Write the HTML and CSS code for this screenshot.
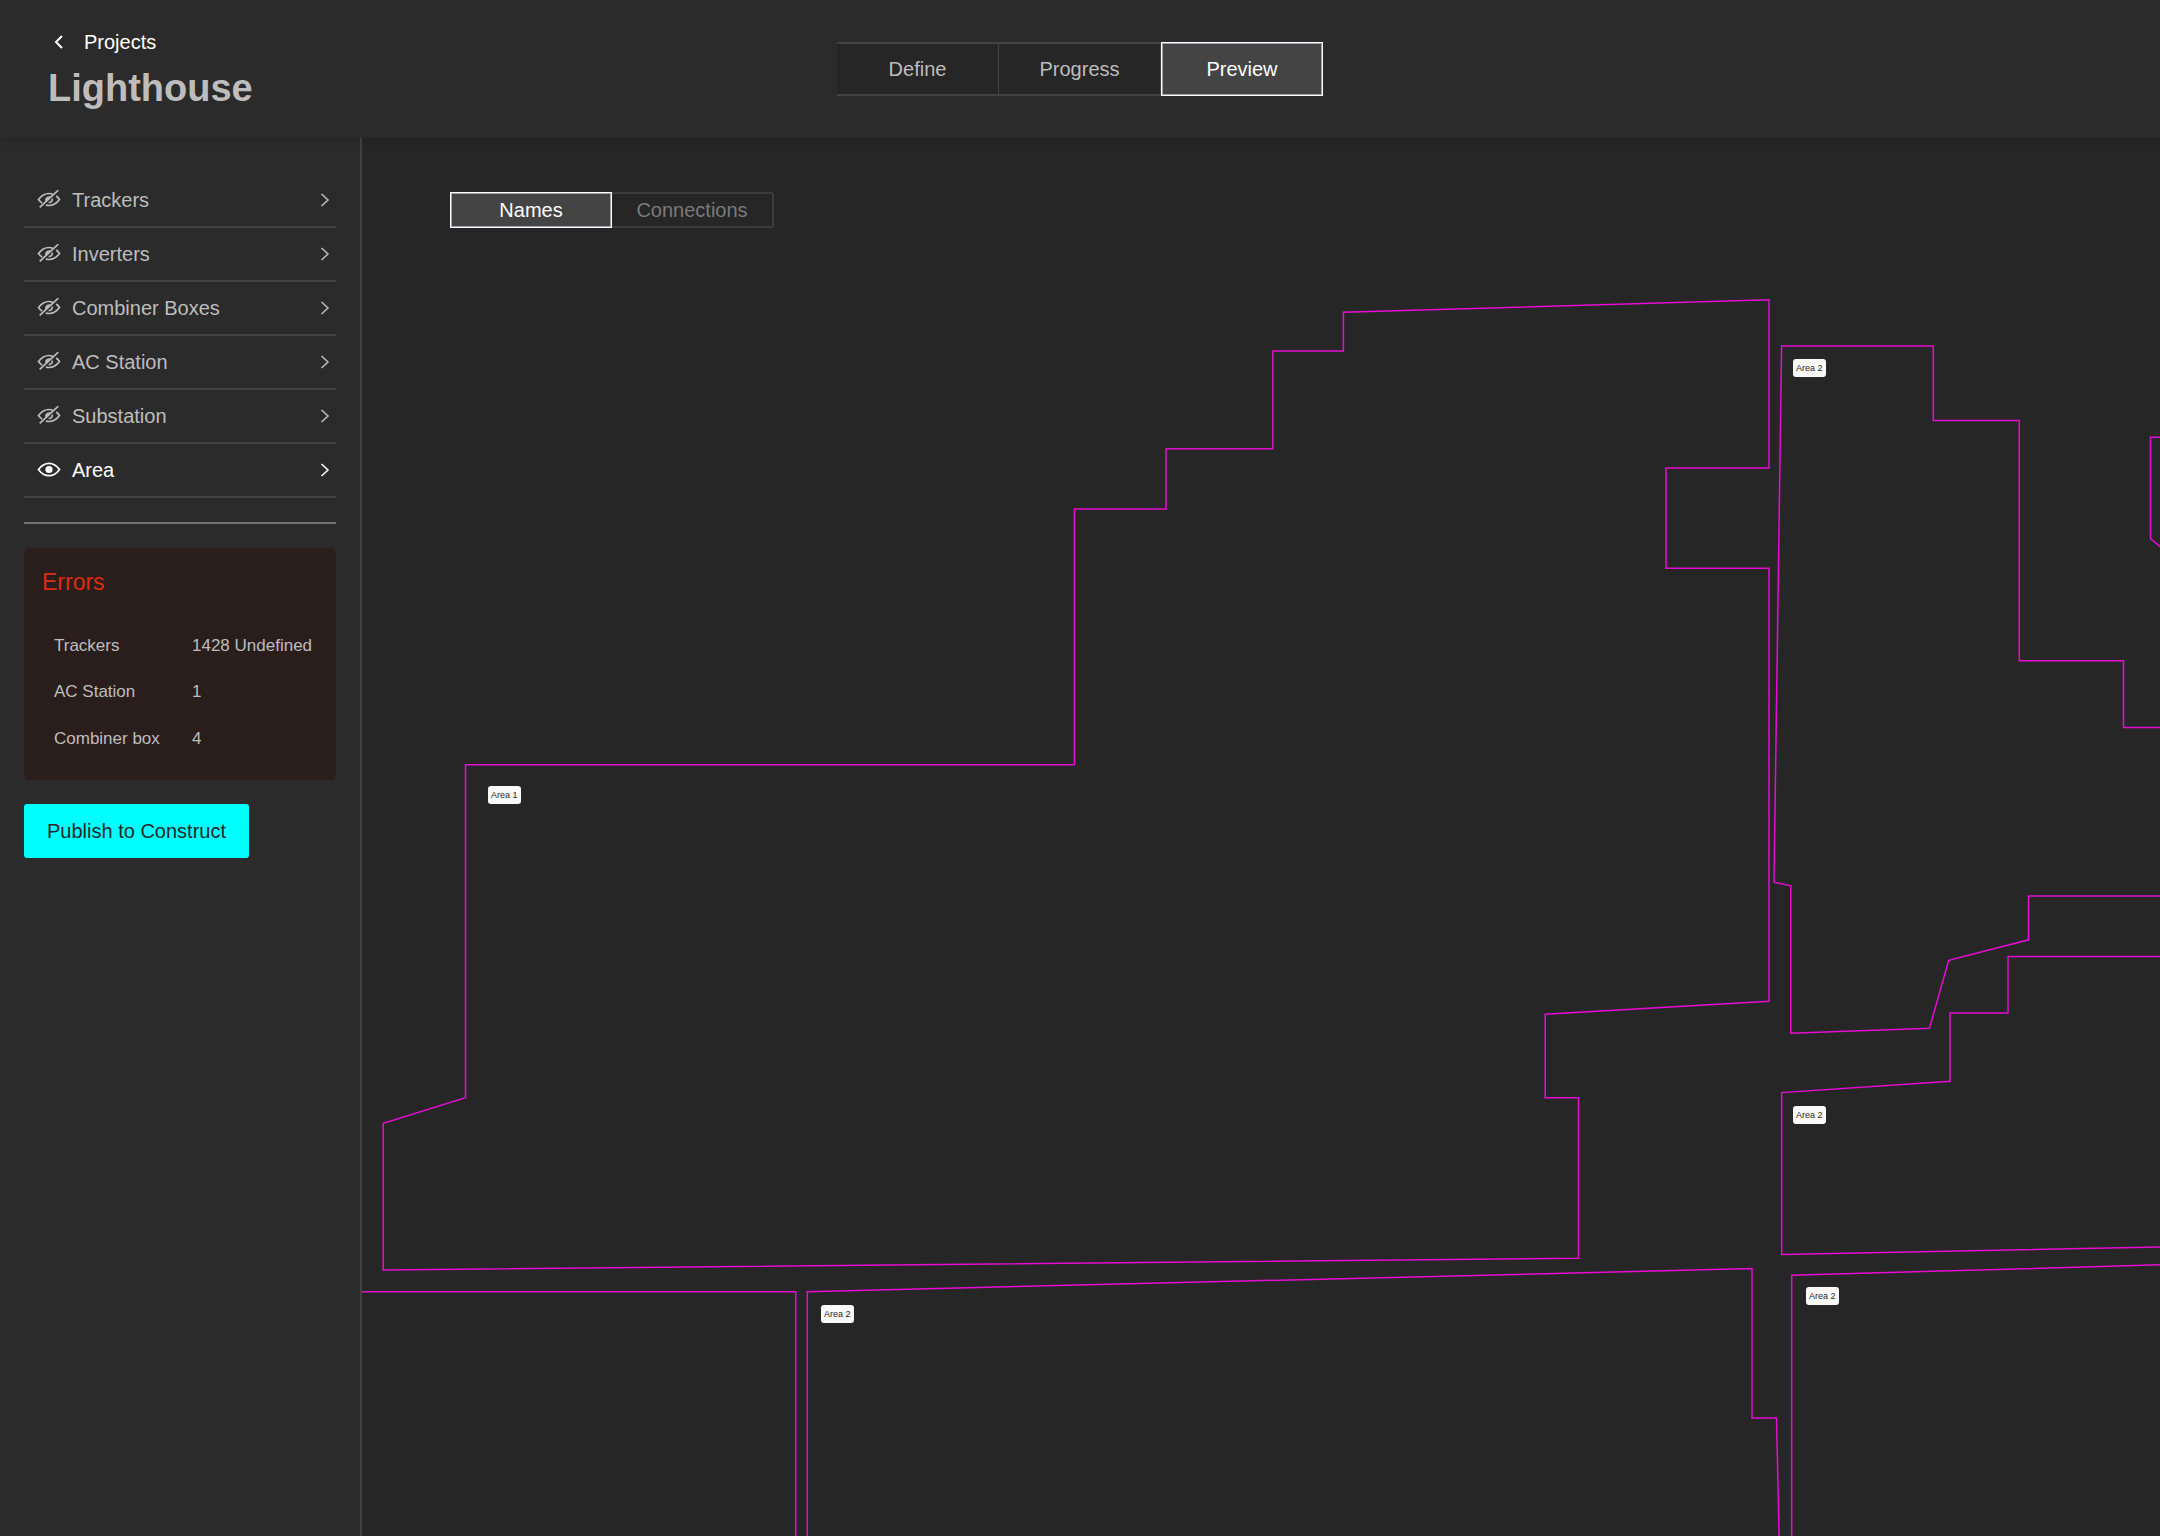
FILE: index.html
```html
<!DOCTYPE html>
<html lang="en">
<head>
<meta charset="utf-8">
<title>Lighthouse</title>
<meta name="viewport" content="width=device-width, initial-scale=1">
<link rel="stylesheet" href="styles.css">
</head>
<body>
<svg class="sprite" aria-hidden="true">
  <symbol id="eye-off" viewBox="0 0 24 20">
    <path d="M15.500 4.100C14.400 3.700 13.200 3.500 12 3.500 8 3.500 4.500 5.500 1.500 9.500c1.100 1.500 2.300 2.700 3.600 3.600M19.200 6C20.400 6.900 21.500 8.100 22.500 9.500c-3 4-6.500 6-10.500 6-1.100 0-2.100-.1-3.100-.4M15.200 8.600c.4 2.300-1.300 4.100-3.500 4M2.700 17.300 21.300.2"/>
    <path class="solid" d="M8.400 11.800C7.300 8.600 9.800 5.300 13.800 6.400z"/>
  </symbol>
  <symbol id="eye" viewBox="0 0 24 20">
    <path d="M1.500 9.500C4.500 5.300 8 3.300 12 3.300s7.500 2 10.500 6.200c-3 4.200-6.500 6.200-10.500 6.200S4.500 13.700 1.500 9.500z"/>
    <circle class="solid" cx="12" cy="9.500" r="3.600"/>
  </symbol>
  <symbol id="chevron" viewBox="0 0 10 14">
    <path d="M1.500 1 8 7l-6.500 6"/>
  </symbol>
</svg>

<header class="topbar">
  <div class="heading">
    <a class="back" href="#">
      <svg class="back-icon" viewBox="0 0 10 14" aria-hidden="true"><path d="M8 1 2 7l6 6"/></svg>
      Projects
    </a>
    <h1>Lighthouse</h1>
  </div>
  <nav class="steps" aria-label="Steps">
    <button type="button">Define</button>
    <button type="button">Progress</button>
    <button type="button" class="active" aria-current="step">Preview</button>
  </nav>
</header>

<div class="workspace">
  <aside class="sidebar">
    <ul class="layers">
      <li><button type="button"><svg class="eye"><use href="#eye-off"/></svg><span>Trackers</span><svg class="chevron"><use href="#chevron"/></svg></button></li>
      <li><button type="button"><svg class="eye"><use href="#eye-off"/></svg><span>Inverters</span><svg class="chevron"><use href="#chevron"/></svg></button></li>
      <li><button type="button"><svg class="eye"><use href="#eye-off"/></svg><span>Combiner Boxes</span><svg class="chevron"><use href="#chevron"/></svg></button></li>
      <li><button type="button"><svg class="eye"><use href="#eye-off"/></svg><span>AC Station</span><svg class="chevron"><use href="#chevron"/></svg></button></li>
      <li><button type="button"><svg class="eye"><use href="#eye-off"/></svg><span>Substation</span><svg class="chevron"><use href="#chevron"/></svg></button></li>
      <li><button type="button" class="visible"><svg class="eye"><use href="#eye"/></svg><span>Area</span><svg class="chevron"><use href="#chevron"/></svg></button></li>
    </ul>
    <hr class="divider">
    <section class="errors">
      <h2>Errors</h2>
      <table>
        <tbody>
          <tr><th scope="row">Trackers</th><td>1428 Undefined</td></tr>
          <tr><th scope="row">AC Station</th><td>1</td></tr>
          <tr><th scope="row">Combiner box</th><td>4</td></tr>
        </tbody>
      </table>
    </section>
    <button type="button" class="publish">Publish to Construct</button>
  </aside>

  <main class="map">
    <svg class="areas" aria-hidden="true">
      <g transform="translate(-362 -138)">
        <path d="M465.500 764.800H1074.400V509H1166V448.700H1272.900V351H1343.400V312.300L1769 299.700V468H1666V568.200H1769V1001.300L1545.200 1014.200V1097.800H1578.500V1258.200L383.200 1269.900V1123.200L465.500 1097.800z"/>
        <path d="M2200 727.600H2123.500V660.700H2019.300V420.400H1933.300V346H1781.600L1774 882.200L1790.800 885.800V1033.300L1929.500 1028.200L1948.700 960.300L2028.500 939.800V896H2200"/>
        <path d="M2200 437.200H2150.500V538.600L2200 580"/>
        <path d="M2200 956.400H2008V1013H1950V1081.200L1781.700 1092.600V1254.500L2200 1246.100"/>
        <path d="M2200 1263.700L1791.700 1275.200V1640"/>
        <path d="M807.300 1640V1291.700L1752 1268.600V1418H1776.500L1781.400 1640"/>
        <path d="M300 1291.700H795.800V1640"/>
      </g>
    </svg>
    <span class="tag tag-1">Area 1</span>
    <span class="tag tag-2">Area 2</span>
    <span class="tag tag-3">Area 2</span>
    <span class="tag tag-4">Area 2</span>
    <span class="tag tag-5">Area 2</span>
    <div class="modes">
      <button type="button" class="active" aria-pressed="true">Names</button>
      <button type="button" aria-pressed="false">Connections</button>
    </div>
  </main>
</div>
</body>
</html>
```

FILE: styles.css
```css
* {
  box-sizing: border-box;
}

body {
  margin: 0;
  min-height: 100vh;
  display: flex;
  flex-direction: column;
  background: #262626;
  color: #bdbdbd;
  font-family: "Liberation Sans", Arial, sans-serif;
  font-size: 20px;
  line-height: 24px;
}

button {
  margin: 0;
  padding: 0;
  border: 0;
  background: none;
  color: inherit;
  font: inherit;
  cursor: pointer;
}

svg {
  fill: none;
  stroke: currentColor;
}

.solid {
  fill: currentColor;
  stroke: none;
}

.sprite {
  position: absolute;
  width: 0;
  height: 0;
}

.topbar {
  position: relative;
  z-index: 1;
  display: grid;
  grid-template-columns: 1fr auto 1fr;
  align-items: start;
  padding: 30px 48px 28px;
  background: #2b2b2b;
  box-shadow: 0 3px 12px rgba(0, 0, 0, 0.12);
}

.back {
  display: flex;
  align-items: center;
  gap: 20px;
  padding-left: 6px;
  color: #fff;
  text-decoration: none;
}

.back-icon {
  width: 10px;
  height: 14px;
  stroke-width: 2;
}

h1 {
  margin: 12px 0 0;
  font-size: 38px;
  line-height: 44px;
}

.steps {
  display: flex;
  margin-top: 12px;
}

.steps button {
  width: 162px;
  height: 54px;
  border: solid #424242;
  border-width: 2px 1px 2px 0;
  background: #262626;
}

.steps .active,
.modes .active {
  border: 1px solid #fff;
  border-radius: 0;
  background: #444;
  box-shadow: inset 0 0 0 1px #a2a2a8;
  color: #fff;
}

.sidebar {
  width: 362px;
  flex: none;
  padding: 36px 24px;
  border-right: 2px solid #424242;
  background: #2b2b2b;
}

.workspace {
  flex: 1;
  display: flex;
}

.layers {
  margin: 0;
  padding: 0;
  list-style: none;
}

.layers button {
  display: flex;
  align-items: center;
  width: 100%;
  height: 54px;
  padding: 0 6px 0 13px;
  border-bottom: 2px solid #424242;
  text-align: left;
}

.layers span {
  flex: 1;
  margin-left: 11px;
}

.layers .visible {
  color: #fff;
}

.eye {
  width: 24px;
  height: 20px;
  stroke-width: 1.7;
}

.chevron {
  width: 10px;
  height: 14px;
  stroke-width: 1.5;
}

.divider {
  height: 2px;
  margin: 24px 0;
  border: 0;
  background: #757575;
}

.errors {
  padding: 21px 18px 18px;
  border-radius: 6px;
  background: #2a1e1d;
}

.errors h2 {
  margin: 0 0 28px;
  color: #dd2c0e;
  font-size: 23px;
  font-weight: 400;
  line-height: 26px;
}

.errors table {
  border-collapse: collapse;
  font-size: 17px;
}

.errors th,
.errors td {
  height: 46px;
  padding: 0 0 0 12px;
  font-weight: 400;
  text-align: left;
  white-space: nowrap;
}

.errors tr:last-child > * {
  height: 47px;
}

.errors th {
  width: 138px;
}

.publish {
  display: block;
  height: 54px;
  margin-top: 24px;
  padding: 0 23px;
  border-radius: 3px;
  background: #0ff;
  color: #262626;
}

.map {
  position: relative;
  flex: 1;
  overflow: hidden;
  padding: 54px 88px;
}

.areas {
  position: absolute;
  inset: 0;
  width: 100%;
  height: 100%;
  stroke: #e60cd2;
  stroke-width: 1.5;
}

.modes {
  position: relative;
  display: flex;
}

.modes button {
  width: 162px;
  height: 36px;
  border: solid #3c3c3c;
  border-width: 2px 2px 2px 0;
  border-radius: 0 3px 3px 0;
  color: #7a7a7a;
}

.modes .active {
  border: 1px solid #fff;
  border-radius: 0;
  color: #fff;
}

/* Area labels, pinned to map coordinates */
.tag {
  position: absolute;
  padding: 0 3px;
  border-radius: 3px;
  background: #fafafa;
  color: #262626;
  font-size: 9px;
  line-height: 18px;
}

.tag-1 { left: 126px; top: 648px; }
.tag-2 { left: 1431px; top: 221px; }
.tag-3 { left: 1431px; top: 968px; }
.tag-4 { left: 1444px; top: 1149px; }
.tag-5 { left: 459px; top: 1167px; }
```
